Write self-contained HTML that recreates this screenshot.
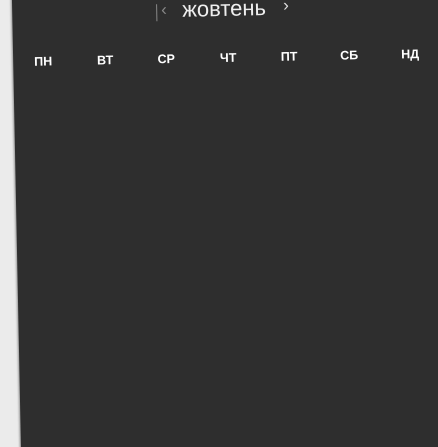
<html style="width:438px;height:447px;overflow:hidden"><head><style>
body{margin:0;width:438px;height:447px;background:#ebebeb;overflow:hidden;position:relative;font-family:"Liberation Sans",sans-serif}
#p{position:absolute;left:12px;top:-20px;width:470px;height:475px;background:#2e2e2e;transform-origin:208px 20px;transform:rotate(-1.15deg);box-shadow:-1px 0 2px rgba(0,0,0,.4)}
.t{position:absolute;color:#fff;white-space:nowrap}
.d{position:absolute;top:71px;color:#fff;font-weight:bold;font-size:12.5px;transform:translateX(-50%)}
</style></head><body>
<div id="p">
<div class="t" style="left:144px;top:23px;width:1px;height:17px;background:#888"></div>
<div class="t" style="left:149px;top:19px;font-size:17px;color:#888">‹</div>
<div class="t" style="left:170px;top:16px;font-size:22px;color:#eee">жовтень</div>
<div class="t" style="left:271px;top:17px;font-size:17px;color:#ddd">›</div>
<div class="d" style="left:30px">ПН</div>
<div class="d" style="left:92px">ВТ</div>
<div class="d" style="left:153px">СР</div>
<div class="d" style="left:215px">ЧТ</div>
<div class="d" style="left:276px">ПТ</div>
<div class="d" style="left:336px">СБ</div>
<div class="d" style="left:397px">НД</div>
</div>
</body></html>
